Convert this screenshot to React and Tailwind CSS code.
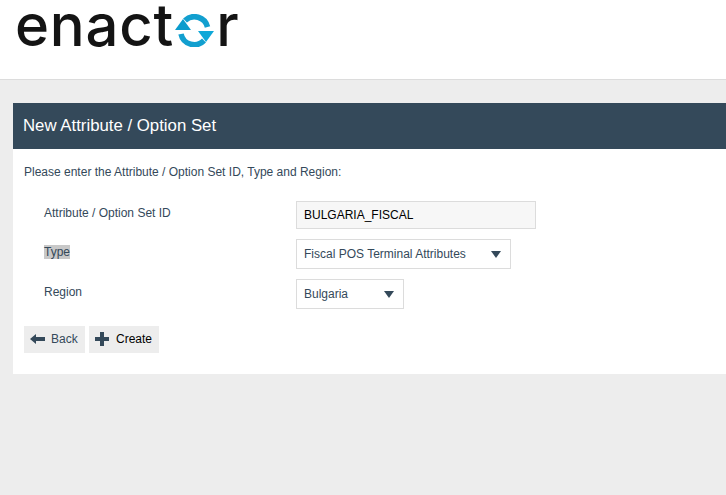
function Caret() {
  return (
    <svg width="10" height="7" viewBox="0 0 10 7" className="shrink-0">
      <path d="M0 0h10L5 7z" fill="#34495a" />
    </svg>
  );
}

function BackIcon() {
  return (
    <svg width="15" height="10" viewBox="0 0 15 10" className="shrink-0">
      <path d="M0 5L6 0v3h9v4H6v3z" fill="#34495a" />
    </svg>
  );
}

function PlusIcon() {
  return (
    <svg width="14" height="14" viewBox="0 0 14 14" className="shrink-0">
      <path d="M5 0h4v5h5v4H9v5H5V9H0V5h5z" fill="#34495a" />
    </svg>
  );
}

function Logo() {
  return (
    <div className="flex items-start h-[79px] pl-[15px] font-['Inter',sans-serif] text-[58px] leading-[50px] text-[#141414] font-[550] select-none">
      <span className="tracking-[0.8px]">enact</span>
      <svg width="41" height="33" viewBox="0 0 41 33" className="mt-[14px] shrink-0">
        <path d="M11 6.5A13.5 13.5 0 0 1 33.5 13" fill="none" stroke="#129fcf" strokeWidth="5.5" />
        <path d="M30 26.5A13.5 13.5 0 0 1 7 20" fill="none" stroke="#129fcf" strokeWidth="5.5" />
        <path d="M1 16L9 5L17 16z" fill="#0b9ccd" />
        <path d="M24 17H40L32 28z" fill="#0fa8d8" />
      </svg>
      <span className="ml-[1px]">r</span>
    </div>
  );
}

function SelectBox({ value, className }) {
  return (
    <div className={`flex items-center justify-between h-[30px] bg-white border border-[#dcdcdc] pl-[7px] text-[12px] text-[#34495a] ${className}`}>
      <span>{value}</span>
      <Caret />
    </div>
  );
}

export default function App() {
  return (
    <div className="min-h-[495px] bg-[#ededed] font-['Liberation_Sans',Arial,sans-serif] overflow-hidden">
      <header className="h-[80px] bg-white border-b border-[#dcdcdc]">
        <Logo />
      </header>

      <main className="ml-[13px] mt-[23px] bg-white">
        <h1 className="h-[46px] flex items-center pl-[10px] bg-[#34495a] text-white text-[16.8px]">New Attribute / Option Set</h1>
        <div className="h-[225px] pl-[11px] pt-[16px] text-[#34495a] text-[12px]">
          <p className="leading-[14px]">Please enter the Attribute / Option Set ID, Type and Region:</p>

          <div className="mt-[22px] pl-[20px] grid grid-cols-[252px_auto] justify-start items-center gap-y-[10px]">
            <label className="-mt-[4px]">Attribute / Option Set ID</label>
            <div className="flex items-center w-[240px] h-[28px] bg-[#f7f7f7] border border-[#dcdcdc] pl-[7px] text-black">BULGARIA_FISCAL</div>
            <label className="-mt-[4px]"><span className="bg-[#c8c8c8]">Type</span></label>
            <SelectBox value="Fiscal POS Terminal Attributes" className="w-[215px] pr-[9px]" />
            <label className="-mt-[4px]">Region</label>
            <SelectBox value="Bulgaria" className="w-[108px] pr-[9px]" />
          </div>

          <div className="mt-[17px] flex gap-[4px]">
            <button className="flex items-center gap-[6px] h-[27px] w-[61px] pl-[6px] pb-[1px] bg-[#ededed] text-[#34495a]">
              <BackIcon />
              Back
            </button>
            <button className="flex items-center gap-[7px] h-[27px] w-[70px] pl-[6px] pb-[1px] bg-[#ededed] text-black">
              <PlusIcon />
              Create
            </button>
          </div>
        </div>
      </main>
    </div>
  );
}
